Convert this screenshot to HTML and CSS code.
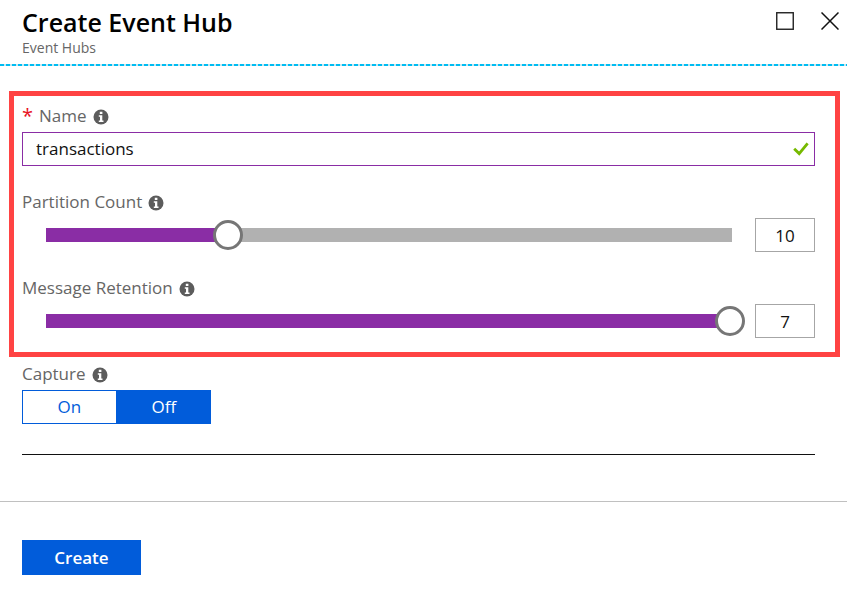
FILE: index.html
```html
<!DOCTYPE html>
<html lang="en">
<head>
<meta charset="utf-8">
<title>Create Event Hub</title>
<link rel="stylesheet" href="styles.css">
</head>
<body>
<svg class="symbols">
  <symbol id="info" viewBox="0 0 16 16">
    <circle cx="8" cy="8" r="7.5" fill="#5c5c5c"/>
    <path d="M6.8 2.8h2.6v2.3H6.8zM5.8 6.3h3.5v5.2h1.2v1.4H5.8v-1.4H7V7.7H5.8z" fill="#fff"/>
  </symbol>
</svg>
<header class="header">
  <div class="heading">
    <h1 class="title">Create Event Hub</h1>
    <p class="subtitle">Event Hubs</p>
  </div>
  <div class="window-actions">
    <button class="icon-button" type="button" aria-label="Maximize">
      <svg width="18" height="18" viewBox="0 0 18 18"><rect x=".75" y=".75" width="16.5" height="16.5" fill="none" stroke="#222" stroke-width="1.4"/></svg>
    </button>
    <button class="icon-button" type="button" aria-label="Close">
      <svg width="18" height="18" viewBox="0 0 18 18"><path d="M.5.5l17 17M17.5.5l-17 17" fill="none" stroke="#111" stroke-width="1.5"/></svg>
    </button>
  </div>
</header>
<form class="form">
  <section class="highlight">
    <div class="field">
      <div class="label-row">
        <span class="required">*</span>
        <label for="name">Name</label>
        <svg class="info"><use href="#info"/></svg>
      </div>
      <div class="text-box">
        <input class="text-input" id="name" type="text" value="transactions">
        <svg class="check" width="16" height="14" viewBox="0 0 16 14"><path d="M1.2 6.8l5 4.8L14.6 1.4" fill="none" stroke="#76b900" stroke-width="2.8"/></svg>
      </div>
    </div>
    <div class="field">
      <div class="label-row">
        <label for="partitions">Partition Count</label>
        <svg class="info"><use href="#info"/></svg>
      </div>
      <div class="slider-row">
        <input class="slider" id="partitions" type="range" min="2" max="32" value="10" style="--fill: 26.67%">
        <input class="number" type="text" value="10" aria-label="Partition Count value">
      </div>
    </div>
    <div class="field">
      <div class="label-row">
        <label for="retention">Message Retention</label>
        <svg class="info"><use href="#info"/></svg>
      </div>
      <div class="slider-row">
        <input class="slider" id="retention" type="range" min="1" max="7" value="7" style="--fill: 100%">
        <input class="number" type="text" value="7" aria-label="Message Retention value">
      </div>
    </div>
  </section>
  <section class="capture">
    <div class="label-row">
      <span id="capture-label">Capture</span>
      <svg class="info"><use href="#info"/></svg>
    </div>
    <div class="toggle" role="group" aria-labelledby="capture-label">
      <button class="option" type="button" aria-pressed="false">On</button>
      <button class="option selected" type="button" aria-pressed="true">Off</button>
    </div>
  </section>
  <footer class="footer">
    <button class="create" type="button">Create</button>
  </footer>
</form>
</body>
</html>
```
FILE: styles.css
```css
* {
  box-sizing: border-box;
}

body {
  margin: 0;
  background: #fff;
  color: #111;
  font: 17px/24px "Open Sans", "Noto Sans", sans-serif;
}

input,
button {
  margin: 0;
  font: inherit;
  color: inherit;
}

.symbols {
  display: none;
}

.header {
  display: flex;
  justify-content: space-between;
  height: 66px;
  padding: 6px 8px 0 22px;
  background: repeating-linear-gradient(90deg, #00bcf2 0 4px, #c8e6ee 4px 6px) bottom / 100% 2px no-repeat;
}

.title {
  margin: 0;
  color: #000;
  font-size: 25px;
  font-weight: 600;
  line-height: 32px;
}

.subtitle {
  margin: 0;
  color: #666;
  font-size: 14px;
  line-height: 20px;
}

.window-actions {
  display: flex;
  align-items: flex-start;
  gap: 27px;
  padding-top: 6px;
}

.icon-button {
  display: flex;
  padding: 0;
  border: 0;
  background: none;
}

.highlight {
  display: grid;
  gap: 20px;
  margin: 25px 7px 0 9px;
  padding: 4px 20px 14px 8px;
  border: 5px solid #ff4343;
}

.label-row {
  display: flex;
  align-items: center;
  gap: 6px;
  height: 32px;
  color: #666;
}

.required {
  color: #e81123;
  font-size: 20px;
}

.info {
  width: 16px;
  height: 16px;
  margin-top: 2px;
}

.text-box {
  display: flex;
  align-items: center;
  height: 34px;
  padding: 0 5px 0 13px;
  border: 1px solid #8a2da5;
}

.text-input {
  flex: 1;
  min-width: 0;
  padding: 0;
  border: 0;
  outline: 0;
  background: none;
}

.slider-row {
  display: flex;
  align-items: center;
  gap: 10px;
  padding-left: 8px;
}

.slider {
  flex: 1;
  min-width: 0;
  height: 30px;
  appearance: none;
  background: linear-gradient(90deg, #8a2da5 var(--fill), #b1b1b1 var(--fill)) 16px center / calc(100% - 29px) 14px no-repeat;
}

.slider::-webkit-slider-thumb {
  width: 30px;
  height: 30px;
  appearance: none;
  border: 3px solid #767676;
  border-radius: 50%;
  background: #fff;
}

.number {
  width: 60px;
  height: 34px;
  padding: 0;
  border: 1px solid #a6a6a6;
  text-align: center;
}

.capture {
  margin: 0 32px 0 22px;
  padding: 1px 0 30px;
  border-bottom: 1px solid #111;
}

.toggle {
  display: flex;
  width: 189px;
}

.option {
  flex: 1;
  height: 34px;
  padding: 0;
  border: 1px solid #015cda;
  background: #fff;
  color: #015cda;
}

.selected {
  background: #015cda;
  color: #fff;
}

.footer {
  margin-top: 46px;
  padding: 38px 22px 15px;
  border-top: 1px solid #c0c0c0;
}

.create {
  display: block;
  width: 119px;
  height: 35px;
  padding: 0;
  border: 0;
  background: #015cda;
  color: #fff;
  font-weight: 600;
}
```
